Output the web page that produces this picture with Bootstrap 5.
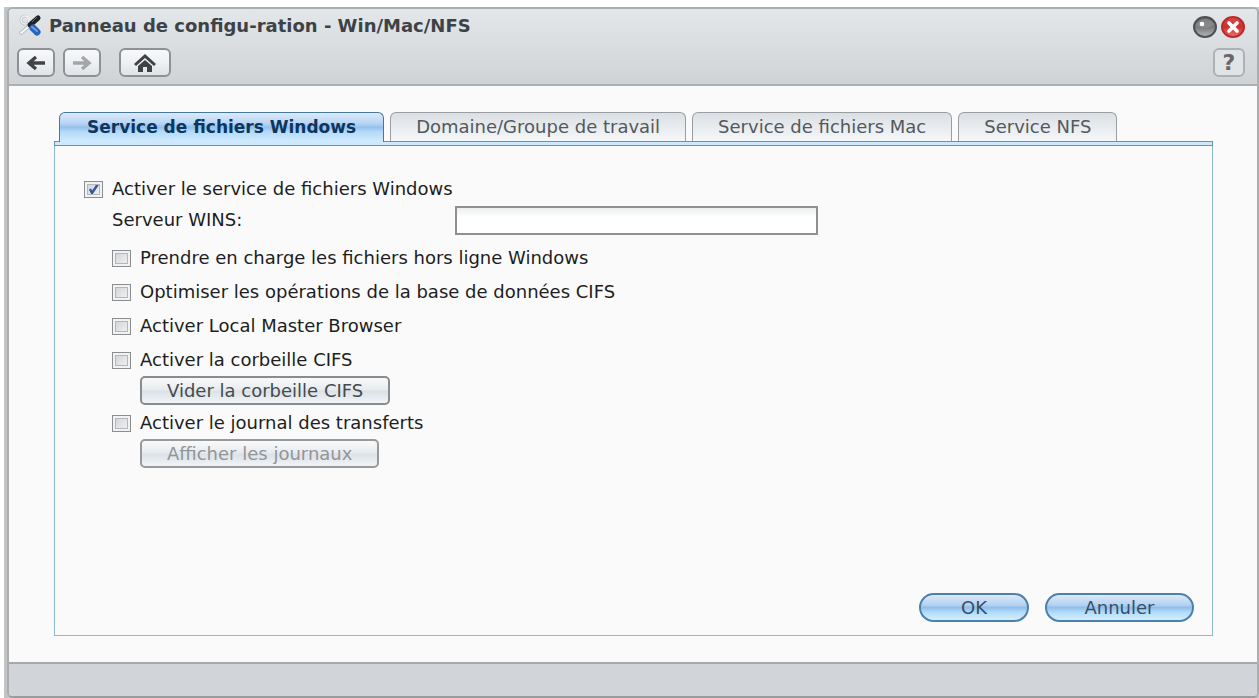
<!DOCTYPE html>
<html lang="fr">
<head>
<meta charset="utf-8">
<meta name="viewport" content="width=device-width, initial-scale=1">
<title>Panneau de configuration</title>
<link href="https://cdn.jsdelivr.net/npm/bootstrap@5.3.0/dist/css/bootstrap.min.css" rel="stylesheet">
<script src="https://cdn.jsdelivr.net/npm/bootstrap@5.3.0/dist/js/bootstrap.bundle.min.js" defer></script>
<style>
  body { font-family: "DejaVu Sans", Verdana, sans-serif; font-size: 18px; line-height: 24px; color: #1d1d22; background: #fff; }
  .desk { padding: 7px 0 0 4px; }
  .win-edge { background: #c3c4c6; padding-left: 3px; }
  .win { border: 2px solid #abadaf; border-bottom-color: #999b9d; border-radius: 6px; background: #fafafa; overflow: hidden; }
  .win-head { height: 77px; padding: 4px 12px 0 8px; background: linear-gradient(#e4e7ea, #cfd3d6); border-bottom: 2px solid #adafb1; }
  .win-title { font-size: 18px; line-height: 26px; font-weight: 700; color: #3d4247; padding-left: 6px; }
  .win-foot { height: 34px; background: #d1d5d9; border-top: 2px solid #a6a8aa; }
  .toolbar { padding-top: 9px; }
  .tool { height: 29px; width: 38px; padding: 0; border: 2px solid #8d9196; border-radius: 6px; background: linear-gradient(#f7f8f9, #eef0f2 50%, #e0e3e6); }
  .tool-home { width: 52px; margin-left: 10px; }
  .tool-help { width: 32px; border-color: #adb0b4; background: #e1e4e7; color: #65686b; font-weight: 700; font-size: 22px; line-height: 24px; }
  .round { border: 0; padding: 0; background: none; width: 24px; height: 24px; }
  .win-main { padding: 26px 44px 26px 45px; }
  .tabs { padding-left: 5px; gap: 6px; border: 0; flex-wrap: nowrap; }
  .tabs .nav-link { height: 29px; padding: 0 25px; line-height: 28px; font-size: 18px; color: #53585d; border: 1px solid #9a9da1; border-bottom: 0; border-radius: 6px 6px 0 0; background: linear-gradient(#dbdfe3, #f5f8fa); margin: 0; white-space: nowrap; }
  .tabs .nav-link.active { height: 30px; padding: 0 27px; font-size: 17px; margin-bottom: -1px; position: relative; color: #0c365e; font-weight: 700; border-color: #46789c; background: linear-gradient(#dceafb, #b9d5f4 35%, #94c2ee 50%, #b5daf8 65%, #d0ebff); }
  .strip { height: 5px; background: #cde8fd; border: 1px solid #6593b3; }
  .panel { border: 1px solid #8eb9d0; border-top: 0; padding: 29px 18px 13px 29px; }
  .opt { height: 28px; gap: 9px; }
  .opt input { appearance: none; width: 19px; height: 17px; flex: none; margin: 0; border: 1px solid #8b8e91; box-shadow: inset 0 0 0 2px #f2f2f2, inset 0 0 0 3px #b3b7bb; background: linear-gradient(135deg, #cbcfd4, #f6f6f6); }
  .opt input:checked { background: url("data:image/svg+xml,%3Csvg xmlns='http://www.w3.org/2000/svg' viewBox='0 0 17 15'%3E%3Cpath d='M5 7l2 4L13 2' fill='none' stroke='%233d5599' stroke-width='2.4'/%3E%3C/svg%3E") center/100% 100%, linear-gradient(135deg, #c4d0dc, #f4f6f8); }
  .wins { height: 34px; }
  .wins label { width: 343px; }
  .wins input { width: 363px; height: 29px; border: 2px solid #8f9092; background: linear-gradient(#eceeee, #fff 9px); padding: 0 6px; }
  .cmd { height: 29px; line-height: 24px; padding: 0 25px; border: 2px solid #888c8f; border-radius: 5px; color: #454a4f; background: linear-gradient(#f8f9fa, #e8ebee 48%, #dbe1e6 52%, #f1f4f7); }
  .cmd:disabled { color: #929599; border-color: #98999b; }
  .pill { height: 29px; line-height: 24px; padding: 0; border: 2px solid #4e80aa; border-radius: 15px; font-size: 18px; color: #374f68; background: linear-gradient(#dce9f9, #b4d1f2 40%, #90bfed 50%, #b4dcfa 70%, #d1f0ff); }
  .pill-ok { width: 110px; }
  .pill-no { width: 149px; }
  .sub { padding-left: 28px; }
  .cmd-row { padding: 2px 0 0 28px; }
  .spaced { gap: 6px; padding-top: 7px; }
</style>
</head>
<body>
<div class="desk min-vh-100 d-flex">
 <div class="win-edge flex-grow-1 d-flex">
  <div class="win flex-grow-1 d-flex flex-column">
    <header class="win-head">
      <div class="d-flex align-items-center">
        <svg width="26" height="24" viewBox="0 0 26 24" class="flex-shrink-0" aria-hidden="true">
          <path d="M4 19L16 9" stroke="#b9bec4" stroke-width="4" stroke-linecap="round"/>
          <path d="M4 19L15 10" stroke="#f5f6f7" stroke-width="2" stroke-linecap="round"/>
          <circle cx="8" cy="6" r="4" fill="none" stroke="#c3c7cb" stroke-width="3" stroke-dasharray="20 5"/>
          <circle cx="8" cy="6" r="4" fill="none" stroke="#edeff0" stroke-width="1.5"/>
          <path d="M10 9l6 6" stroke="#c7ccd1" stroke-width="3"/>
          <path d="M13 11L21 4" stroke="#1e2328" stroke-width="5" stroke-linecap="round"/>
          <path d="M15 8l5-5" stroke="#656d74" stroke-width="1"/>
          <path d="M16 14l4 4" stroke="#2864b8" stroke-width="7" stroke-linecap="round"/>
          <path d="M15 13l5 4" stroke="#65a3e7" stroke-width="2" stroke-linecap="round"/>
        </svg>
        <h1 class="win-title m-0 flex-grow-1">Panneau de configu-ration - Win/Mac/NFS</h1>
        <div class="d-flex gap-1">
          <button class="round" aria-label="Réduire"><svg class="d-block" width="24" height="24" viewBox="0 0 24 24"><defs><linearGradient id="gg" x2="0" y2="1"><stop stop-color="#626466"/><stop offset=".5" stop-color="#77797b"/><stop offset="1" stop-color="#b5b7b8"/></linearGradient></defs><ellipse cx="12" cy="13" rx="11" ry="10" fill="url(#gg)" stroke="#4e5052" stroke-width="2"/><path d="M3 12Q5 5 12 5Q19 5 21 11Q14 16 3 12" fill="#999b9d" opacity=".5"/><circle cx="9" cy="10" r="2.3" fill="#fff"/></svg></button>
          <button class="round" aria-label="Fermer"><svg class="d-block" width="24" height="24" viewBox="0 0 24 24"><defs><linearGradient id="rg" x2="0" y2="1"><stop stop-color="#d94b48"/><stop offset=".5" stop-color="#cf2e2c"/><stop offset="1" stop-color="#ee7570"/></linearGradient></defs><ellipse cx="12" cy="13" rx="11" ry="10" fill="url(#rg)" stroke="#b92a2a" stroke-width="2"/><path d="M8 9l8 8M16 9l-8 8" stroke="#fff" stroke-width="3.6" stroke-linecap="round"/></svg></button>
        </div>
      </div>
      <nav class="toolbar d-flex gap-2 align-items-center">
        <button class="tool" aria-label="Précédent"><svg class="d-block mx-auto" width="20" height="16" viewBox="0 0 20 16"><path d="M10 2L3 8l7 6M3 8h16" fill="none" stroke="#414447" stroke-width="3.4"/></svg></button>
        <button class="tool" aria-label="Suivant"><svg class="d-block mx-auto" width="20" height="16" viewBox="0 0 20 16"><path d="M10 2l7 6-7 6M17 8H1" fill="none" stroke="#a3a6a8" stroke-width="3.4"/></svg></button>
        <button class="tool tool-home" aria-label="Accueil"><svg class="d-block mx-auto" width="24" height="18" viewBox="0 0 24 18"><path d="M1 10L12 0l11 10-2 2-9-8-9 8z" fill="#3f4245"/><path d="M5 12l7-6 7 6v6h-5v-5h-4v5H5z" fill="#3f4245"/></svg></button>
        <button class="tool tool-help ms-auto" aria-label="Aide">?</button>
      </nav>
    </header>
    <main class="win-main flex-grow-1 d-flex flex-column">
      <nav class="nav nav-tabs tabs">
        <a class="nav-link active" href="#windows">Service de fichiers Windows</a>
        <a class="nav-link" href="#domaine">Domaine/Groupe de travail</a>
        <a class="nav-link" href="#mac">Service de fichiers Mac</a>
        <a class="nav-link" href="#nfs">Service NFS</a>
      </nav>
      <div class="strip"></div>
      <form class="panel flex-grow-1 d-flex flex-column" id="windows">
        <div class="opt d-flex align-items-center"><input type="checkbox" id="o1" checked><label for="o1">Activer le service de fichiers Windows</label></div>
        <div class="sub">
          <div class="wins d-flex align-items-center"><label for="wins">Serveur WINS:</label><input type="text" id="wins"></div>
          <div class="d-flex flex-column spaced">
            <div class="opt d-flex align-items-center"><input type="checkbox" id="o2"><label for="o2">Prendre en charge les fichiers hors ligne Windows</label></div>
            <div class="opt d-flex align-items-center"><input type="checkbox" id="o3"><label for="o3">Optimiser les opérations de la base de données CIFS</label></div>
            <div class="opt d-flex align-items-center"><input type="checkbox" id="o4"><label for="o4">Activer Local Master Browser</label></div>
            <div class="opt d-flex align-items-center"><input type="checkbox" id="o5"><label for="o5">Activer la corbeille CIFS</label></div>
          </div>
          <div class="cmd-row d-flex"><button type="button" class="cmd">Vider la corbeille CIFS</button></div>
          <div class="opt d-flex align-items-center mt-1"><input type="checkbox" id="o6"><label for="o6">Activer le journal des transferts</label></div>
          <div class="cmd-row d-flex"><button type="button" class="cmd" disabled>Afficher les journaux</button></div>
        </div>
        <div class="d-flex justify-content-end gap-3 mt-auto"><button type="submit" class="pill pill-ok">OK</button><button type="button" class="pill pill-no">Annuler</button></div>
      </form>
    </main>
    <footer class="win-foot"></footer>
  </div>
 </div>
</div>
</body>
</html>
